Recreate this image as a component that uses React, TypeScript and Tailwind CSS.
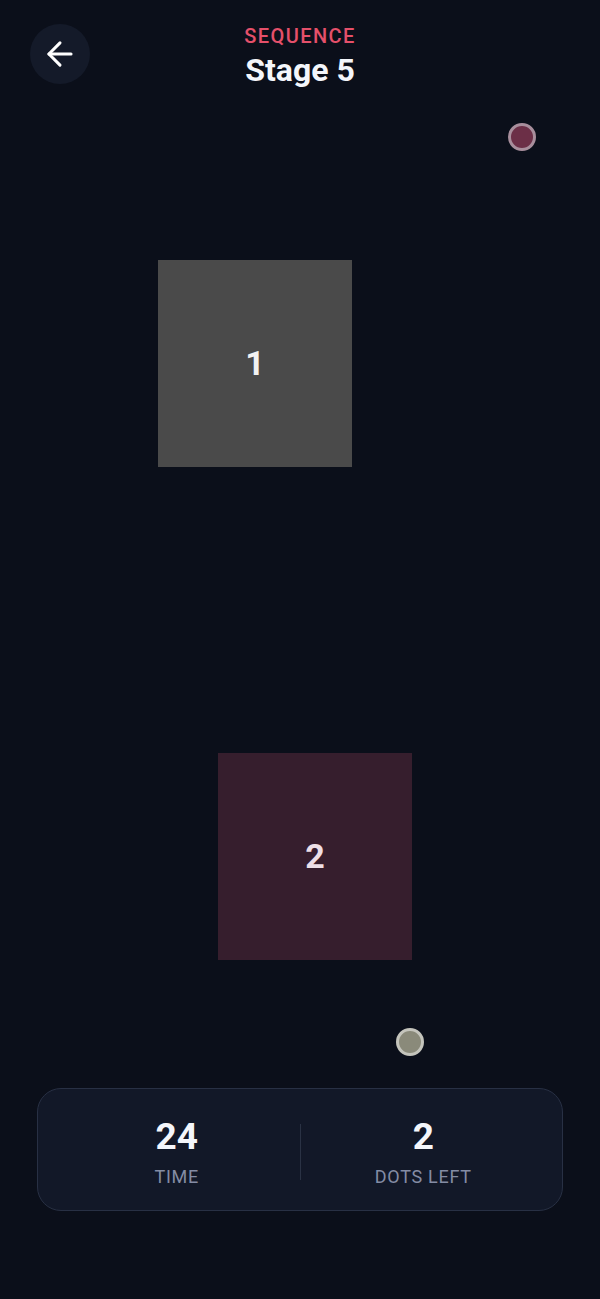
import { ArrowLeft } from "lucide-react";

type Tile = {
  id: number;
  label: string;
  className: string;
};

type Dot = {
  id: number;
  className: string;
};

const tiles: Tile[] = [
  {
    id: 1,
    label: "1",
    className: "left-[158px] top-[150px] bg-[#4a4a4a] text-[#f2f2f2]",
  },
  {
    id: 2,
    label: "2",
    className: "left-[218px] top-[643px] bg-[#361e2d] text-[#eddfe6]",
  },
];

const dots: Dot[] = [
  {
    id: 1,
    className: "left-[508px] top-[13px] border-[#a88e9c] bg-[#6c2f47]",
  },
  {
    id: 2,
    className: "left-[396px] top-[918px] border-[#c4c4bc] bg-[#8a8a7a]",
  },
];

function StatCell({ value, label }: { value: string; label: string }) {
  return (
    <div className="flex flex-1 flex-col items-center">
      <span className="text-[37px] font-bold leading-none text-[#f4f6fb]">
        {value}
      </span>
      <span className="mt-[13px] text-[18px] leading-none tracking-[0.04em] text-[#848ca4]">
        {label}
      </span>
    </div>
  );
}

export default function App() {
  return (
    <div
      className="flex h-[1299px] w-full flex-col bg-[#0b0f1a]"
      style={{ fontFamily: "Roboto, 'Noto Sans', sans-serif" }}
    >
      <header className="relative h-[110px] shrink-0">
        <button
          type="button"
          className="absolute left-[30px] top-[24px] flex size-[60px] items-center justify-center rounded-full bg-[#141a29] text-white"
        >
          <ArrowLeft size={38} strokeWidth={1.9} />
        </button>
        <div className="flex flex-col items-center pt-[26px]">
          <span className="text-[20px] font-medium leading-none tracking-[0.07em] text-[#e5506a]">
            SEQUENCE
          </span>
          <h1 className="mt-[8px] text-[32px] font-bold leading-none text-[#f4f6fb]">
            Stage 5
          </h1>
        </div>
      </header>

      <main className="relative flex-1">
        {tiles.map((tile) => (
          <div
            key={tile.id}
            className={`absolute flex h-[207px] w-[194px] items-center justify-center text-[34px] font-bold ${tile.className}`}
          >
            {tile.label}
          </div>
        ))}
        {dots.map((dot) => (
          <div
            key={dot.id}
            className={`absolute size-[28px] rounded-full border-[3px] ${dot.className}`}
          />
        ))}
      </main>

      <section className="mx-[37px] mb-[88px] flex h-[123px] shrink-0 items-center rounded-[24px] border border-[#283044] bg-[#121828] px-4 pt-[5px]">
        <StatCell value="24" label="TIME" />
        <div className="h-[56px] w-px self-center bg-[#2a3244]" />
        <StatCell value="2" label="DOTS LEFT" />
      </section>
    </div>
  );
}
